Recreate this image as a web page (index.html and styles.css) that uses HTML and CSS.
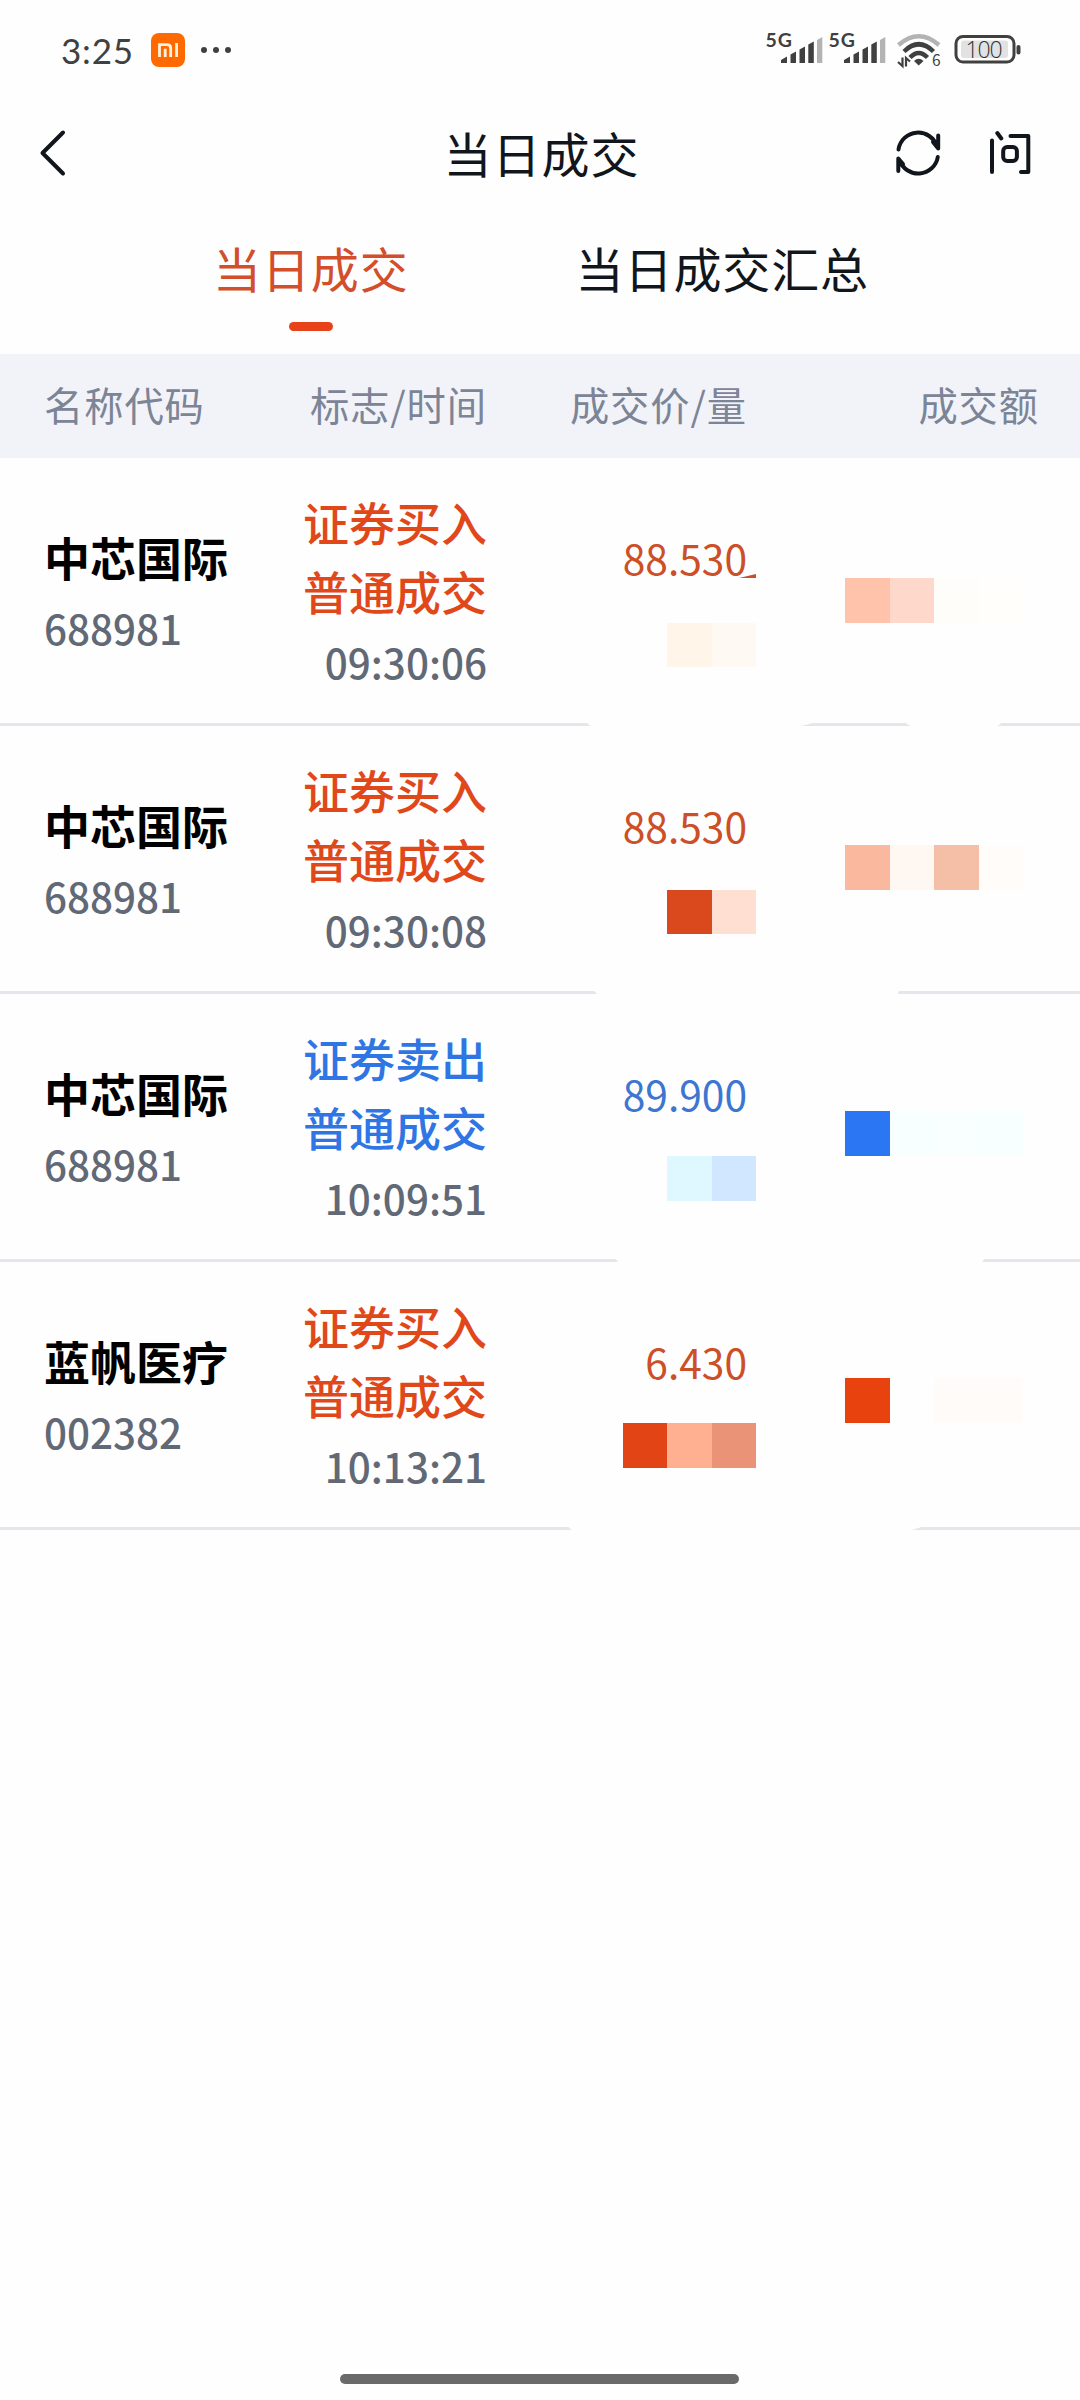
FILE: index.html
```html
<!DOCTYPE html>
<html lang="zh-CN">

<head>
    <meta charset="UTF-8">
    <meta name="viewport" content="width=device-width, initial-scale=1.0">
    <title>当日成交</title>
    <link rel="stylesheet" href="styles.css">
</head>

<body>
    <div class="status">
        <span class="clock">3:25</span>
        <svg class="mi" width="34" height="34" viewBox="0 0 34 34">
            <rect width="34" height="34" rx="8" fill="#ff6900" />
            <path d="M8.500 24V11.700H16Q19.700 11.700 19.700 15.400V24M14.200 15.700V24M25.600 10V24" fill="none" stroke="#fff3dc" stroke-width="2.800" />
        </svg>
        <svg class="dots" width="30" height="6" viewBox="0 0 30 6" fill="#404040">
            <circle cx="3" cy="3" r="3" />
            <circle cx="15" cy="3" r="3" />
            <circle cx="27" cy="3" r="3" />
        </svg>
        <svg class="signals" width="264" height="80" viewBox="760 10 264 80">
            <g id="signal">
                <text class="net" x="765.5" y="46.7">5G</text>
                <path d="M781 63V60L787 56.500V63ZM790.500 63V54.500L796 51.500V63ZM799.500 63V49.500L805 46.500V63ZM808.300 63V44.500L813.800 41.500V63Z" fill="#404040" />
                <path d="M817 63V40L822.300 37V63Z" fill="#b3b3b3" />
            </g>
            <use href="#signal" x="63" />
            <g fill="none" stroke="#404040" stroke-width="4.500">
                <path d="M898.500 45Q918.700 27.500 939 45" stroke="#b3b3b3" />
                <path d="M904 51.500Q918.700 37 933.500 51.500" />
                <path d="M910 57.500Q918.700 48.500 927.500 57.500" />
            </g>
            <path d="M914 61Q918.700 56.500 923.500 61L918.700 65.500Z" fill="#404040" />
            <path d="M902.500 57.500V66L898 62M906 66.500V58L910 61.500" fill="none" stroke="#404040" stroke-width="2.200" />
            <text class="wifi-gen" x="932" y="65.700">6</text>
            <rect x="956" y="36.500" width="58" height="25.500" rx="7" fill="none" stroke="#404040" stroke-width="3" />
            <rect x="961" y="40.500" width="47" height="17.500" rx="3" fill="#e2e2e2" />
            <text class="level" x="983.500" y="57.900">100</text>
            <rect x="1016.500" y="45" width="4" height="9.500" rx="2" fill="#404040" />
        </svg>
    </div>

    <div class="navbar">
        <svg width="30" height="50" viewBox="38 128 30 50">
            <path d="M63 132.500L42.500 153L63 173.500" />
        </svg>
        <h1>当日成交</h1>
        <svg width="142" height="50" viewBox="892 128 142 50">
            <path d="M898.500 149.500A19.800 19.800 0 0 1 937 146.500M938.200 135.500V148.500L933 142" />
            <path d="M937.800 157A19.800 19.800 0 0 1 899.500 160M898.300 171V158.500L903 164" />
            <path d="M992 140.500V172M997.300 133L1001.300 138.500M1010.500 136H1028.300V172H1021" />
            <rect x="1003.200" y="147" width="13.700" height="14" rx="4" />
        </svg>
    </div>

    <div class="tabs">
        <div class="tab active">当日成交</div>
        <div class="tab">当日成交汇总</div>
    </div>

    <div class="thead">
        <span>名称代码</span>
        <span>标志/时间</span>
        <span>成交价/量</span>
        <span>成交额</span>
    </div>

    <div class="row buy first">
        <div class="stock">
            <div class="name">中芯国际</div>
            <div class="code">688981</div>
        </div>
        <div class="type">
            <div>证券买入</div>
            <div>普通成交</div>
            <div class="time">09:30:06</div>
        </div>
        <div class="price">
            <div>88.530</div>
            <svg class="tick" width="17" height="4" viewBox="0 0 17 4">
                <path d="M0 4L17 0V4Z" fill="#c9502a" />
            </svg>
            <div class="mosaic">
                <i style="background:#fff6e9"></i>
                <i style="background:#fff9f3"></i>
            </div>
        </div>
        <div class="amount mosaic">
            <i style="background:#fec3aa"></i>
            <i style="background:#fdd8cb"></i>
            <i style="background:#fffdf9"></i>
            <i style="background:#fffefb"></i>
        </div>
        <svg class="line" width="1080" height="3" viewBox="0 0 1080 3">
            <path d="M0 0H587L590.500 3H0ZM801 3L813 0H905.500L910.500 3ZM997.500 3L1001.500 0H1080V3Z" />
        </svg>
    </div>

    <div class="row buy second">
        <div class="stock">
            <div class="name">中芯国际</div>
            <div class="code">688981</div>
        </div>
        <div class="type">
            <div>证券买入</div>
            <div>普通成交</div>
            <div class="time">09:30:08</div>
        </div>
        <div class="price">
            <div>88.530</div>
            <div class="mosaic">
                <i style="background:#da481d"></i>
                <i style="background:#ffdfd2"></i>
            </div>
        </div>
        <div class="amount mosaic">
            <i style="background:#fab89f"></i>
            <i style="background:#fff8f2"></i>
            <i style="background:#f4bfa6"></i>
            <i style="background:#fffcf9"></i>
        </div>
        <svg class="line" width="1080" height="3" viewBox="0 0 1080 3">
            <path d="M0 0H594L597 3H0ZM898 3L899 0H1080V3Z" />
        </svg>
    </div>

    <div class="row sell third">
        <div class="stock">
            <div class="name">中芯国际</div>
            <div class="code">688981</div>
        </div>
        <div class="type">
            <div>证券卖出</div>
            <div>普通成交</div>
            <div class="time">10:09:51</div>
        </div>
        <div class="price">
            <div>89.900</div>
            <div class="mosaic">
                <i style="background:#dff8ff"></i>
                <i style="background:#d1e7ff"></i>
            </div>
        </div>
        <div class="amount mosaic">
            <i style="background:#2b76f3"></i>
            <i style="background:#f7ffff"></i>
            <i style="background:#f9ffff"></i>
            <i style="background:#f7ffff"></i>
        </div>
        <svg class="line" width="1080" height="3" viewBox="0 0 1080 3">
            <path d="M0 0H615.500L618.500 3H0ZM982 3L984.500 0H1080V3Z" />
        </svg>
    </div>

    <div class="row buy fourth">
        <div class="stock">
            <div class="name">蓝帆医疗</div>
            <div class="code">002382</div>
        </div>
        <div class="type">
            <div>证券买入</div>
            <div>普通成交</div>
            <div class="time">10:13:21</div>
        </div>
        <div class="price">
            <div>6.430</div>
            <div class="mosaic">
                <i style="background:#e34415"></i>
                <i style="background:#ffb091"></i>
                <i style="background:#eb9376"></i>
            </div>
        </div>
        <div class="amount mosaic">
            <i style="background:#e8420f"></i>
            <i style="background:#fefefe"></i>
            <i style="background:#fffbf8"></i>
            <i style="background:#fffbf8"></i>
        </div>
        <svg class="line" width="1080" height="3" viewBox="0 0 1080 3">
            <path d="M0 0H568.500L571.500 3H0ZM912 3L921.500 0H1080V3Z" />
        </svg>
    </div>

    <div class="home"></div>
</body>

</html>
```
FILE: styles.css
```css
* {
    box-sizing: border-box;
}

body {
    margin: 0;
    width: 1080px;
    height: 2400px;
    display: flex;
    flex-direction: column;
    background: #fefefe;
    font-family: "Noto Sans CJK SC", sans-serif;
    overflow: hidden;
}

svg {
    display: block;
    flex: none;
}

.status {
    height: 100px;
    display: flex;
    align-items: center;
    padding: 0 56px 0 61px;
}

.clock {
    width: 90px;
    font: 35px/40px "Lato", sans-serif;
    letter-spacing: 0.8px;
    color: #404040;
}

.dots {
    margin-left: 16px;
}

.signals {
    margin-left: auto;
}

.net {
    font: bold 19.5px "Lato", sans-serif;
    letter-spacing: 1px;
    fill: #404040;
}

.wifi-gen {
    font: 15.5px "Noto Sans CJK SC", sans-serif;
    fill: #404040;
}

.level {
    font: 300 23px "Open Sans", "Noto Sans", sans-serif;
    letter-spacing: -1.2px;
    text-anchor: middle;
    fill: #333;
}

.navbar {
    height: 106px;
    display: flex;
    align-items: center;
    justify-content: space-between;
    padding: 0 46px 0 38px;
}

.navbar svg {
    fill: none;
    stroke: #11161c;
    stroke-width: 4;
    stroke-linecap: round;
    stroke-linejoin: round;
}

.navbar h1 {
    margin: -3px 0 0 123px;
    font-size: 48px;
    font-weight: 400;
    line-height: 60px;
    letter-spacing: 1px;
    color: #11161c;
}

.tabs {
    height: 148px;
    display: flex;
    padding-left: 213px;
    gap: 167px;
}

.tab {
    display: flex;
    flex-direction: column;
    align-items: center;
    padding-top: 29px;
    font-size: 48px;
    line-height: 64px;
    letter-spacing: 0.9px;
    color: #11161c;
}

.active {
    color: #d34e2a;
}

.active::after {
    content: "";
    width: 44px;
    height: 9px;
    margin-top: 23px;
    border-radius: 4.5px;
    background: #e8421b;
}

.thead {
    height: 104px;
    display: grid;
    grid-template-columns: 200px 243px 260px 292px;
    align-items: center;
    padding: 0 0 5px 44px;
    background: #f2f3f8;
    font-size: 39.3px;
    letter-spacing: 0.9px;
    color: #7c8497;
}

.thead span:not(:first-child) {
    text-align: right;
}

.row {
    height: 268px;
    display: grid;
    grid-template-columns: 200px 243px 269px 268px;
    grid-template-rows: 265px 3px;
    padding-left: 44px;
}

.name {
    margin-top: 68px;
    font-size: 46px;
    font-weight: 700;
    line-height: 60px;
    color: #000;
}

.code,
.time {
    font-size: 40.4px;
    font-weight: 500;
    line-height: 60px;
    color: #626976;
}

.code {
    margin-top: 12px;
}

.type {
    padding-top: 29px;
    text-align: right;
    font-size: 46px;
    font-weight: 500;
    line-height: 69px;
}

.type .time {
    margin-top: 7px;
    color: #626976;
}

.price {
    display: flex;
    flex-direction: column;
    align-items: flex-end;
    padding-top: 70px;
    font-size: 40.7px;
    line-height: 60px;
    position: relative;
}

.price > div:first-child {
    margin-right: 9px;
}

.buy .type {
    color: #e0481a;
}

.buy .price {
    color: #cc4f27;
}

.sell .type {
    color: #2f76e4;
}

.sell .price {
    color: #3c76d0;
}

/* leftover corner of the mosaic brush */
.tick {
    position: absolute;
    right: 0;
    top: 116px;
}

.mosaic {
    display: flex;
}

.mosaic i {
    width: 44.5px;
    height: 44.5px;
}

.price .mosaic {
    margin-top: 34.5px;
}

.amount {
    margin: 120px 0 0 89px;
}

.second .price .mosaic {
    margin-top: 33.5px;
}

.second .amount {
    margin-top: 119px;
}

.third .price .mosaic {
    margin-top: 32px;
}

.third .amount {
    margin-top: 117px;
}

.fourth .price .mosaic {
    margin-top: 31px;
}

.fourth .amount {
    margin-top: 116px;
}

.line {
    grid-column: 1 / -1;
    margin-left: -44px;
    fill: #e3e6ea;
}

.home {
    width: 399px;
    height: 10px;
    margin: auto 0 16px 340px;
    border-radius: 5px;
    background: #6a6a6a;
}
```
